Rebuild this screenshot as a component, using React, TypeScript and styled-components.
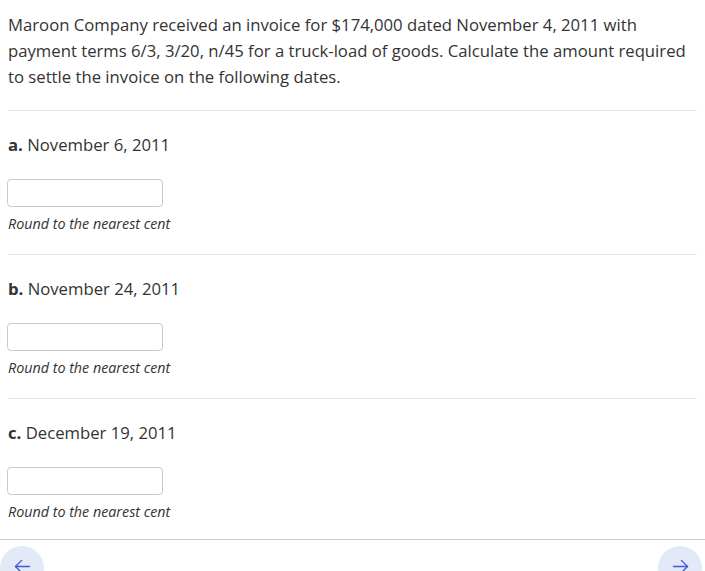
import React from 'react'
import styled, { createGlobalStyle } from 'styled-components'

const GlobalStyle = createGlobalStyle`
  html, body {
    margin: 0;
    padding: 0;
    background: #ffffff;
  }
  body {
    font-family: "Open Sans", "Liberation Sans", sans-serif;
    color: #333333;
    overflow: hidden;
  }
`

const Page = styled.div`
  width: 705px;
  height: 571px;
  display: flex;
  flex-direction: column;
  overflow: hidden;
`

const Content = styled.div`
  padding: 12px 8px 0;
  flex: 1;
`

const Prompt = styled.p`
  margin: 0;
  font-size: 16.7px;
  line-height: 26px;
  padding-bottom: 20px;
  border-bottom: 1px solid #e6e8eb;
`

const Part = styled.section<{ last?: boolean }>`
  padding: 22px 0 ${({ last }) => (last ? '0' : '20px')};
  border-bottom: ${({ last }) => (last ? 'none' : '1px solid #e6e8eb')};
`

const Label = styled.div`
  font-size: 16.7px;
  line-height: 24px;

  b {
    font-weight: 700;
  }
`

const AnswerInput = styled.input`
  display: block;
  box-sizing: border-box;
  width: 156px;
  height: 28px;
  margin: 22px 0 0 -1px;
  border: 1px solid #c3ccd6;
  border-radius: 4px;
  background: #ffffff;
  font-family: inherit;
  font-size: 14px;
  padding: 0 8px;
  outline: none;
`

const Hint = styled.div`
  margin-top: 7px;
  font-size: 14.3px;
  line-height: 20px;
  font-style: italic;
`

const Footer = styled.div`
  height: 25px;
  border-top: 1px solid #c5ccd6;
  display: flex;
  justify-content: space-between;
  align-items: flex-start;
  padding: 6px 3px 0 0;
  overflow: hidden;
`

const NavButton = styled.button`
  width: 44px;
  height: 44px;
  border-radius: 50%;
  border: none;
  background: #e3e9f6;
  color: #3e5be0;
  display: flex;
  align-items: center;
  justify-content: center;
  padding: 0 0 4px;
  flex-shrink: 0;
  cursor: pointer;
`

const Arrow = ({ dir }: { dir: 'left' | 'right' }) => (
  <svg
    width="21"
    height="21"
    viewBox="0 0 24 24"
    fill="none"
    stroke="currentColor"
    strokeWidth="1.6"
    strokeLinecap="round"
    strokeLinejoin="round"
    style={{ transform: dir === 'right' ? 'scaleX(-1)' : undefined }}
  >
    <path d="M20 12H4" />
    <path d="M11 5l-7 7 7 7" />
  </svg>
)

const parts = [
  { key: 'a', date: 'November 6, 2011' },
  { key: 'b', date: 'November 24, 2011' },
  { key: 'c', date: 'December 19, 2011' },
]

export default function App() {
  return (
    <Page>
      <GlobalStyle />
      <Content>
        <Prompt>
          Maroon Company received an invoice for $174,000 dated November 4, 2011 with
          payment terms 6/3, 3/20, n/45 for a truck-load of goods. Calculate the amount
          required to settle the invoice on the following dates.
        </Prompt>
        {parts.map((p, i) => (
          <Part key={p.key} last={i === parts.length - 1}>
            <Label>
              <b>{p.key}.</b> {p.date}
            </Label>
            <AnswerInput type="text" aria-label={`Answer ${p.key}`} />
            <Hint>Round to the nearest cent</Hint>
          </Part>
        ))}
      </Content>
      <Footer>
        <NavButton aria-label="Previous">
          <Arrow dir="left" />
        </NavButton>
        <NavButton aria-label="Next">
          <Arrow dir="right" />
        </NavButton>
      </Footer>
    </Page>
  )
}
